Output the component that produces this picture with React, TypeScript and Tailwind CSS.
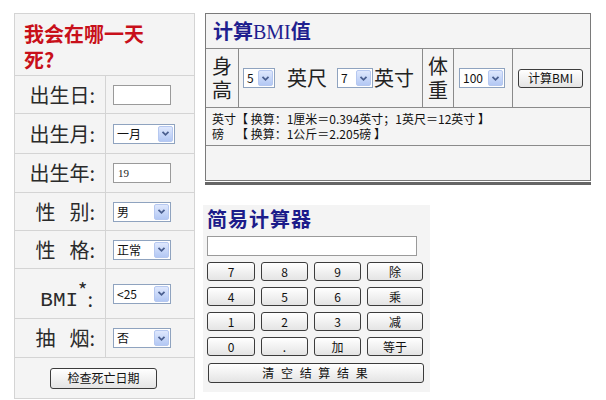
import React from "react";

const Chevron = () => (
  <svg width="9" height="7" viewBox="0 0 9 7">
    <path d="M1.5 1.8 L4.5 4.8 L7.5 1.8" fill="none" stroke="#4a5f8f" strokeWidth="1.8" />
  </svg>
);

type SelProps = { value: string; className: string };

const Sel = ({ value, className }: SelProps) => (
  <div className={`flex items-center h-[20px] border border-[#8fa3bf] bg-white ${className}`}>
    <span className="flex-1 pl-[3px] text-[12px] leading-none text-[#111] whitespace-nowrap">{value}</span>
    <span className="w-[15px] h-[16px] mr-px flex items-center justify-center rounded-[2px] border border-[#b6c8f0] bg-linear-to-b from-[#dfe8fd] to-[#b3c8f4]">
      <Chevron />
    </span>
  </div>
);

const Btn = ({ children, className }: { children: React.ReactNode; className: string }) => (
  <div
    className={`flex items-center justify-center rounded-[3px] border border-[#3c3c3c] bg-linear-to-b from-white to-[#e4e4e4] text-[12px] leading-none text-[#111] whitespace-nowrap ${className}`}
  >
    {children}
  </div>
);

const Row = ({ label, children, h, last }: { label: React.ReactNode; children: React.ReactNode; h: string; last?: boolean }) => (
  <div className={`grid grid-cols-[91px_1fr] ${h} ${last ? "" : "border-b border-[#d4d4d4]"}`}>
    <div className="flex items-center justify-end pr-[10px] border-r border-[#d4d4d4] text-[20px] leading-none text-[#2a2a2a]">
      {label}
    </div>
    <div className="flex items-center pl-[7px]">{children}</div>
  </div>
);

export default function App() {
  const calcKeys = ["7", "8", "9", "除", "4", "5", "6", "乘", "1", "2", "3", "减", "0", ".", "加", "等于"];

  return (
    <div className="w-[606px] h-[400px] bg-white flex items-start overflow-hidden font-['Noto_Sans_CJK_SC',sans-serif] text-[#222]">
      {/* left form */}
      <div className="ml-[14px] mt-[13px] w-[181px] border border-[#d4d4d4] bg-[#f4f4f4] flex flex-col">
        <div className="h-[62px] border-b border-[#d4d4d4] pl-[9px] pt-[7px]">
          <div className="w-[130px] text-[20px] leading-[26px] font-bold text-[#c8101a]">我会在哪一天死?</div>
        </div>
        <Row label="出生日:" h="h-[38px]">
          <div className="w-[58px] h-[20px] border border-[#9a9a9a] bg-white" />
        </Row>
        <Row label="出生月:" h="h-[40px]">
          <Sel value="一月" className="w-[62px]" />
        </Row>
        <Row label="出生年:" h="h-[39px]">
          <div className="w-[58px] h-[20px] border border-[#9a9a9a] bg-white pl-[4px] flex items-center text-[11px] font-['Liberation_Serif',serif]">19</div>
        </Row>
        <Row label={<><span>性</span><span className="w-[14px]" /><span>别:</span></>} h="h-[38px]">
          <Sel value="男" className="w-[58px]" />
        </Row>
        <Row label={<><span>性</span><span className="w-[14px]" /><span>格:</span></>} h="h-[38px]">
          <Sel value="正常" className="w-[58px]" />
        </Row>
        <Row
          label={
            <span className="mt-[12px] flex items-start pr-[2px]">
              <span className="font-['Liberation_Mono',monospace] text-[21px] leading-none mt-[1px]">BMI</span>
              <span className="text-[20px] leading-none -mt-[9px]">*</span>
              <span className="leading-none">:</span>
            </span>
          }
          h="h-[50px]"
        >
          <Sel value="<25" className="w-[58px]" />
        </Row>
        <Row label={<><span>抽</span><span className="w-[14px]" /><span>烟:</span></>} h="h-[39px]">
          <Sel value="否" className="w-[58px]" />
        </Row>
        <div className="h-[40px] flex items-center justify-center">
          <Btn className="w-[107px] h-[21px] -ml-[2px]">检查死亡日期</Btn>
        </div>
      </div>

      {/* right column */}
      <div className="ml-[10px] mt-[13px] flex flex-col">
        <div className="w-[386px] pb-px border-b-[3px] border-[#666]">
          <div className="border border-[#7a7a7a] bg-[#f4f4f4] flex flex-col">
            <div className="h-[35px] border-b border-[#8a8a8a] flex items-center pl-[7px]">
              <span className="text-[20px] leading-none font-bold text-[#1f1f8f]">
                计算<span className="font-['Liberation_Serif',serif] font-normal">BMI</span>值
              </span>
            </div>
            <div className="h-[59px] border-b border-[#8a8a8a] flex">
              <div className="w-[33px] border-r border-[#8a8a8a] flex flex-col items-center justify-center text-[20px] leading-[24px]">
                <span>身</span>
                <span>高</span>
              </div>
              <div className="w-[184px] border-r border-[#8a8a8a] flex items-center pl-[4px] text-[20px] leading-none">
                <Sel value="5" className="w-[32px]" />
                <span className="ml-[12px]">英尺</span>
                <Sel value="7" className="w-[36px] ml-[10px]" />
                <span className="ml-px">英寸</span>
              </div>
              <div className="w-[31px] border-r border-[#8a8a8a] flex flex-col items-center justify-center text-[20px] leading-[24px]">
                <span>体</span>
                <span>重</span>
              </div>
              <div className="w-[59px] border-r border-[#8a8a8a] flex items-center pl-[5px]">
                <Sel value="100" className="w-[46px]" />
              </div>
              <div className="flex-1 flex items-center pl-[5px]">
                <Btn className="w-[65px] h-[19px]">计算BMI</Btn>
              </div>
            </div>
            <div className="h-[38px] border-b border-[#8a8a8a] pl-[6px] pt-[4px] text-[12px] leading-[14.5px] text-[#111]">
              <div className="flex whitespace-nowrap">
                <span className="w-[24px]">英寸</span>
                <span>【 换算：1厘米＝0.394英寸；1英尺＝12英寸 】</span>
              </div>
              <div className="flex whitespace-nowrap">
                <span className="w-[24px]">磅</span>
                <span>【 换算：1公斤＝2.205磅 】</span>
              </div>
            </div>
            <div className="h-[34px]" />
          </div>
        </div>

        {/* calculator */}
        <div className="mt-[20px] -ml-[2px] w-[227px] h-[187px] bg-[#f4f4f4] pl-[4px] pt-[2px] flex flex-col">
          <div className="text-[20px] leading-[24px] font-bold text-[#1c1c8a] tracking-[1px]">简易计算器</div>
          <div className="mt-[5px] w-[210px] h-[20px] border border-[#9a9a9a] bg-white" />
          <div className="mt-[6px] grid grid-cols-[48px_47px_47px_56px] gap-x-[6px] gap-y-[6px]">
            {calcKeys.map((k) => (
              <Btn key={k} className="h-[19px]">
                {k}
              </Btn>
            ))}
          </div>
          <Btn className="mt-[7px] ml-px w-[216px] h-[20px] border-[#2a3550] tracking-[2px]">清 空 结 算 结 果</Btn>
        </div>
      </div>
    </div>
  );
}
